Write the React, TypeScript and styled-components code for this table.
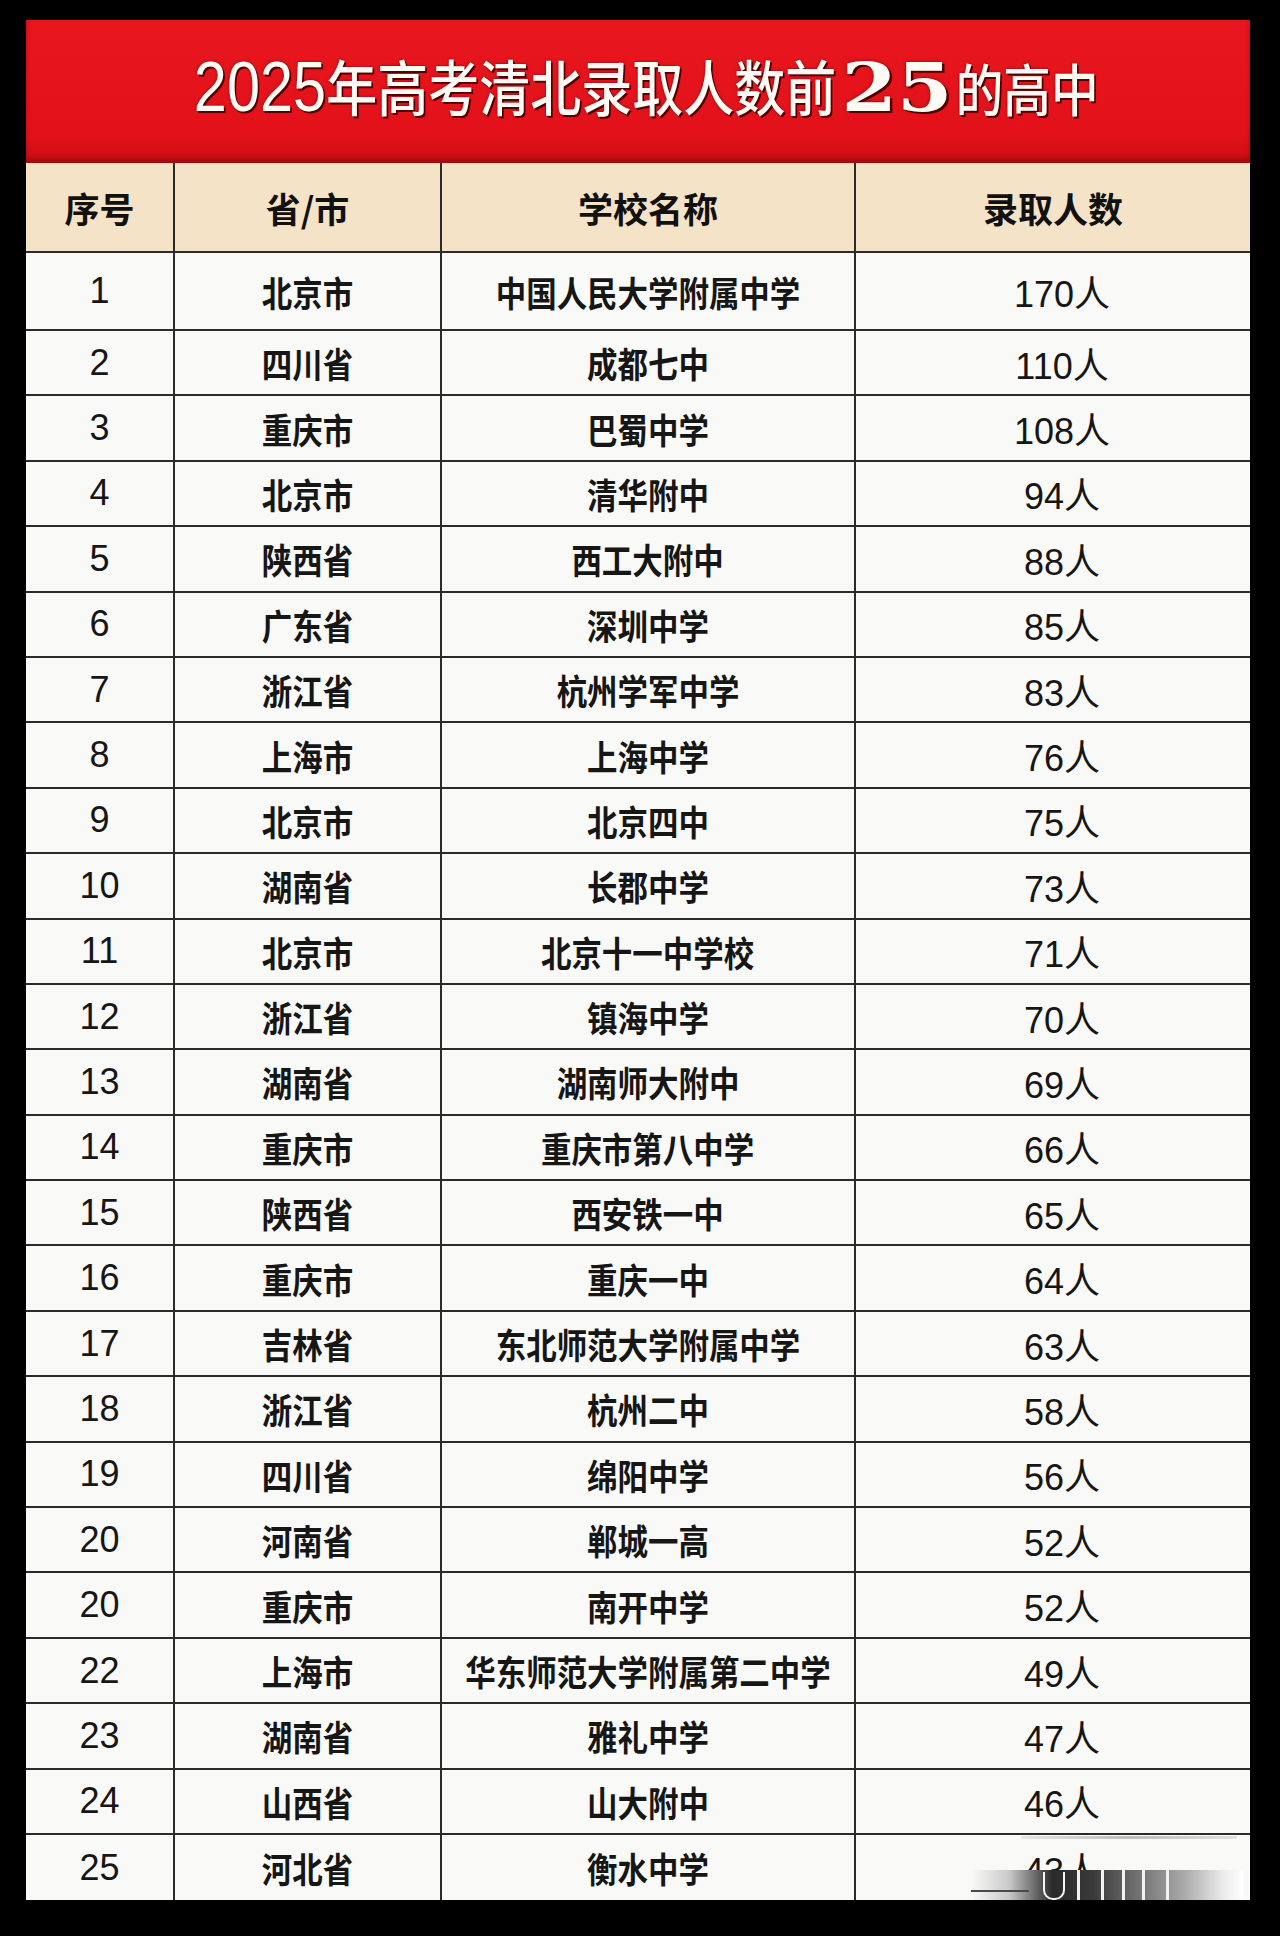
import React from "react";
import styled, { createGlobalStyle } from "styled-components";

const Global = createGlobalStyle`
  html, body { margin: 0; padding: 0; background: #000; }
  #root { width: 1280px; }
`;

const Page = styled.div`
  width: 1280px;
  height: 1936px;
  box-sizing: border-box;
  padding: 20px 30px 34px 26px;
  background: #000;
`;

const Sheet = styled.div`
  width: 1224px;
  display: flex;
  flex-direction: column;
  background: #f8f8f7;
`;

const Banner = styled.div`
  height: 143px;
  box-sizing: border-box;
  padding-bottom: 14px;
  display: flex;
  align-items: center;
  justify-content: center;
  background: linear-gradient(180deg, #e8161d 0%, #e3121a 80%, #c90d13 100%);
  box-shadow: inset 0 -4px 5px rgba(80, 0, 0, 0.35);
`;

const TitleLine = styled.h1`
  margin: 0 0 0 16px;
  display: inline-flex;
  align-items: baseline;
  white-space: nowrap;
  color: #fffaf4;
  transform: scaleX(0.85);
  text-shadow: 2px 2px 0 rgba(70, 0, 0, 0.9), 0 0 3px rgba(0, 0, 0, 0.5);
  font-weight: 400;
`;

const TitleDigits = styled.span`
  font-family: "Liberation Sans", Arial, sans-serif;
  font-size: 70px;
  font-weight: 400;
`;

const TitleHan = styled.span<{ $size: number }>`
  font-family: "Noto Sans CJK SC", sans-serif;
  font-size: ${(p) => p.$size}px;
  font-weight: 500;
`;

const TitleBig = styled.span`
  display: inline-block;
  font-family: "DejaVu Serif", "Liberation Serif", serif;
  font-size: 68px;
  font-weight: 700;
  margin: 0 22px 0 24px;
  transform: scaleX(1.38);
`;

const Row = styled.div<{ $h: number; $head?: boolean }>`
  display: grid;
  grid-template-columns: 149px 267px 414px 394px;
  height: ${(p) => p.$h}px;
  box-sizing: border-box;
  border-bottom: 2px solid #2b2b2b;
  background: ${(p) => (p.$head ? "#f5e3c8" : "#f9f9f8")};
  &:last-child { border-bottom: none; }
`;

const Cell = styled.div<{ $shift?: number }>`
  position: relative;
  display: flex;
  align-items: center;
  justify-content: center;
  box-sizing: border-box;
  padding-left: ${(p) => p.$shift ?? 0}px;
  border-right: 2px solid #2b2b2b;
  color: #141414;
  &:last-child { border-right: none; }
`;

const HeadText = styled.span`
  font-family: "Noto Sans CJK SC", sans-serif;
  font-size: 35px;
  font-weight: 700;
  color: #111;
`;

const NumText = styled.span`
  font-family: "Liberation Sans", "Noto Sans CJK SC", sans-serif;
  font-size: 36px;
  font-weight: 400;
  color: #161616;
`;

const HanText = styled.span`
  display: inline-block;
  font-family: "Noto Sans CJK SC", sans-serif;
  font-size: 35px;
  font-weight: 700;
  color: #161616;
  transform: scaleX(0.87);
  white-space: nowrap;
`;

const Glitch = styled.div`
  position: absolute;
  left: 115px;
  bottom: 0;
  width: 272px;
  height: 30px;
  background: linear-gradient(
    90deg,
    rgba(255, 255, 255, 0.2) 0%,
    #c9c9c9 14%,
    #7a7a7a 22%,
    #2a2a2a 30%,
    #3a3a3a 45%,
    #6d6d6d 60%,
    #a8a8a8 78%,
    #e8e8e8 92%,
    #ffffff 100%
  );
`;

const GlitchLine = styled.div<{ $left: number }>`
  position: absolute;
  left: ${(p) => p.$left}px;
  top: 0;
  bottom: 0;
  width: 3px;
  background: #f2f2f2;
`;

const GlitchCapsule = styled.div`
  position: absolute;
  left: 72px;
  top: 2px;
  width: 22px;
  height: 28px;
  box-sizing: border-box;
  border: 2px solid #f4f4f4;
  border-top: none;
  border-radius: 0 0 10px 10px;
`;

const GlitchDash = styled.div`
  position: absolute;
  left: 0;
  bottom: 8px;
  width: 58px;
  height: 2px;
  background: #4a4a4a;
`;

const Streak = styled.div`
  position: absolute;
  left: 165px;
  top: 1px;
  width: 216px;
  height: 3px;
  background: linear-gradient(90deg, #e6e6e6, #bdbdbd 50%, #e0e0e0);
  border-radius: 2px;
`;

type R = [string, string, string, string];

const rows: R[] = [
  ["1", "北京市", "中国人民大学附属中学", "170人"],
  ["2", "四川省", "成都七中", "110人"],
  ["3", "重庆市", "巴蜀中学", "108人"],
  ["4", "北京市", "清华附中", "94人"],
  ["5", "陕西省", "西工大附中", "88人"],
  ["6", "广东省", "深圳中学", "85人"],
  ["7", "浙江省", "杭州学军中学", "83人"],
  ["8", "上海市", "上海中学", "76人"],
  ["9", "北京市", "北京四中", "75人"],
  ["10", "湖南省", "长郡中学", "73人"],
  ["11", "北京市", "北京十一中学校", "71人"],
  ["12", "浙江省", "镇海中学", "70人"],
  ["13", "湖南省", "湖南师大附中", "69人"],
  ["14", "重庆市", "重庆市第八中学", "66人"],
  ["15", "陕西省", "西安铁一中", "65人"],
  ["16", "重庆市", "重庆一中", "64人"],
  ["17", "吉林省", "东北师范大学附属中学", "63人"],
  ["18", "浙江省", "杭州二中", "58人"],
  ["19", "四川省", "绵阳中学", "56人"],
  ["20", "河南省", "郸城一高", "52人"],
  ["20", "重庆市", "南开中学", "52人"],
  ["22", "上海市", "华东师范大学附属第二中学", "49人"],
  ["23", "湖南省", "雅礼中学", "47人"],
  ["24", "山西省", "山大附中", "46人"],
  ["25", "河北省", "衡水中学", "43人"],
];

export default function App() {
  return (
    <Page>
      <Global />
      <Sheet>
        <Banner>
          <TitleLine>
            <TitleDigits>2025</TitleDigits>
            <TitleHan $size={60}>年高考清北录取人数前</TitleHan>
            <TitleBig>25</TitleBig>
            <TitleHan $size={56}>的高中</TitleHan>
          </TitleLine>
        </Banner>
        <Row $h={90} $head>
          <Cell><HeadText>序号</HeadText></Cell>
          <Cell><HeadText>省/市</HeadText></Cell>
          <Cell><HeadText>学校名称</HeadText></Cell>
          <Cell><HeadText>录取人数</HeadText></Cell>
        </Row>
        {rows.map((r, i) => {
          const last = i === rows.length - 1;
          return (
            <Row key={i} $h={i === 0 ? 78 : 65.4}>
              <Cell><NumText>{r[0]}</NumText></Cell>
              <Cell><HanText>{r[1]}</HanText></Cell>
              <Cell><HanText>{r[2]}</HanText></Cell>
              <Cell $shift={18}>
                <NumText>{r[3]}</NumText>
                {last && (
                  <>
                    <Streak />
                    <Glitch>
                      <GlitchDash />
                      <GlitchCapsule />
                      <GlitchLine $left={106} />
                      <GlitchLine $left={130} />
                      <GlitchLine $left={151} />
                      <GlitchLine $left={171} />
                      <GlitchLine $left={195} />
                    </Glitch>
                  </>
                )}
              </Cell>
            </Row>
          );
        })}
      </Sheet>
    </Page>
  );
}
